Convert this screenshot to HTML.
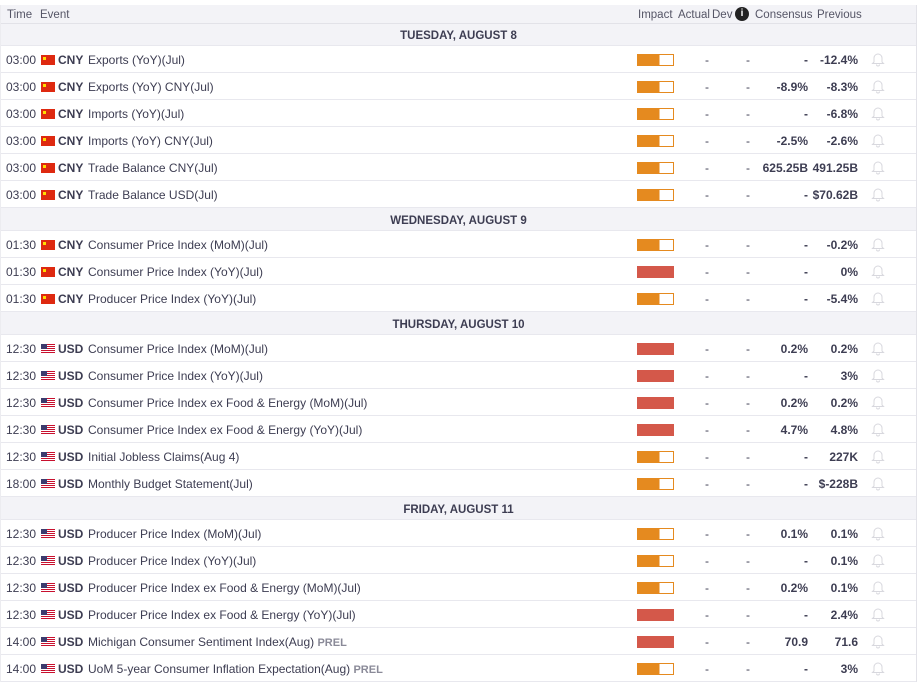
<!DOCTYPE html><html><head><meta charset="utf-8"><style>
*{margin:0;padding:0;box-sizing:border-box}
body{width:918px;height:683px;background:#fff;font-family:"Liberation Sans",Arial,sans-serif;font-size:12px;color:#3d3d52;overflow:hidden;position:relative}
.wrap{position:absolute;left:0;top:5px;width:917px;border-right:1px solid #e2e2e8;border-left:1px solid #ececf0}
.hdr{height:19px;background:#f3f3f7;border-bottom:1px solid #e2e2e8;position:relative;color:#555566;font-size:11.5px}
.hdr span{position:absolute;top:4px}
.date{height:22px;background:#f3f3f7;text-align:center;font-weight:bold;font-size:11.5px;line-height:20px;padding-top:2px;color:#3d3d52;border-bottom:1px solid #e8e8ee}
.date.n{height:23px;line-height:20px;padding-top:3px}
.row{height:27px;border-bottom:1px solid #e8e8ee;position:relative}
.row>*{position:absolute;top:7px}
.t{left:5px}
.f{left:40px;top:9px;width:14px;height:10px}
.cn{background:#de2910}
.cn:after{content:"";position:absolute;left:2px;top:2px;width:3px;height:3px;background:#ffde00}
.us{background:repeating-linear-gradient(#c8102e 0 1px,#fff 1px 2px)}
.us:after{content:"";position:absolute;left:0;top:0;width:6px;height:5px;background:#3c3b6e}
.c{left:57px;font-weight:bold}
.e{left:87px}
.p{color:#8a8a98;font-weight:bold;font-size:11px}
.bar{left:636px;top:8px;width:37px;height:12px;border:1px solid #e58a1f;background:linear-gradient(90deg,#e58a1f 62%,#fff 62%)}
.bar.r{background:#d4584a;border-color:#d4584a}
.a{left:704px}.d{left:745px}
.cs{right:108px;font-weight:bold;text-align:right}
.pv{right:58px;font-weight:bold;text-align:right}
.b{left:870px;top:5px}
</style></head><body><div class="wrap">
<div class="hdr"><span style="left:6px">Time</span><span style="left:39px">Event</span><span style="left:637px">Impact</span><span style="left:677px">Actual</span><span style="left:711px">Dev</span><span style="left:734px;top:2px;width:14px;height:14px;border-radius:50%;background:#222;color:#fff;text-align:center;font-weight:bold;font-size:10px;line-height:14px">i</span><span style="left:754px">Consensus</span><span style="left:816px">Previous</span></div>
<div class="date">TUESDAY, AUGUST 8</div>
<div class="row"><span class="t">03:00</span><i class="f cn"></i><span class="c">CNY</span><span class="e">Exports (YoY)(Jul)</span><i class="bar"></i><span class="a">-</span><span class="d">-</span><span class="cs">-</span><span class="pv">-12.4%</span><svg class="b" width="14" height="16" viewBox="0 0 14 16"><path d="M3 11V7a4 4 0 0 1 8 0v4l1.5 1.5h-11zM5.5 13.5a1.5 1.5 0 0 0 3 0" fill="none" stroke="#d8d8de"/></svg></div>
<div class="row"><span class="t">03:00</span><i class="f cn"></i><span class="c">CNY</span><span class="e">Exports (YoY) CNY(Jul)</span><i class="bar"></i><span class="a">-</span><span class="d">-</span><span class="cs">-8.9%</span><span class="pv">-8.3%</span><svg class="b" width="14" height="16" viewBox="0 0 14 16"><path d="M3 11V7a4 4 0 0 1 8 0v4l1.5 1.5h-11zM5.5 13.5a1.5 1.5 0 0 0 3 0" fill="none" stroke="#d8d8de"/></svg></div>
<div class="row"><span class="t">03:00</span><i class="f cn"></i><span class="c">CNY</span><span class="e">Imports (YoY)(Jul)</span><i class="bar"></i><span class="a">-</span><span class="d">-</span><span class="cs">-</span><span class="pv">-6.8%</span><svg class="b" width="14" height="16" viewBox="0 0 14 16"><path d="M3 11V7a4 4 0 0 1 8 0v4l1.5 1.5h-11zM5.5 13.5a1.5 1.5 0 0 0 3 0" fill="none" stroke="#d8d8de"/></svg></div>
<div class="row"><span class="t">03:00</span><i class="f cn"></i><span class="c">CNY</span><span class="e">Imports (YoY) CNY(Jul)</span><i class="bar"></i><span class="a">-</span><span class="d">-</span><span class="cs">-2.5%</span><span class="pv">-2.6%</span><svg class="b" width="14" height="16" viewBox="0 0 14 16"><path d="M3 11V7a4 4 0 0 1 8 0v4l1.5 1.5h-11zM5.5 13.5a1.5 1.5 0 0 0 3 0" fill="none" stroke="#d8d8de"/></svg></div>
<div class="row"><span class="t">03:00</span><i class="f cn"></i><span class="c">CNY</span><span class="e">Trade Balance CNY(Jul)</span><i class="bar"></i><span class="a">-</span><span class="d">-</span><span class="cs">625.25B</span><span class="pv">491.25B</span><svg class="b" width="14" height="16" viewBox="0 0 14 16"><path d="M3 11V7a4 4 0 0 1 8 0v4l1.5 1.5h-11zM5.5 13.5a1.5 1.5 0 0 0 3 0" fill="none" stroke="#d8d8de"/></svg></div>
<div class="row"><span class="t">03:00</span><i class="f cn"></i><span class="c">CNY</span><span class="e">Trade Balance USD(Jul)</span><i class="bar"></i><span class="a">-</span><span class="d">-</span><span class="cs">-</span><span class="pv">$70.62B</span><svg class="b" width="14" height="16" viewBox="0 0 14 16"><path d="M3 11V7a4 4 0 0 1 8 0v4l1.5 1.5h-11zM5.5 13.5a1.5 1.5 0 0 0 3 0" fill="none" stroke="#d8d8de"/></svg></div>
<div class="date n">WEDNESDAY, AUGUST 9</div>
<div class="row"><span class="t">01:30</span><i class="f cn"></i><span class="c">CNY</span><span class="e">Consumer Price Index (MoM)(Jul)</span><i class="bar"></i><span class="a">-</span><span class="d">-</span><span class="cs">-</span><span class="pv">-0.2%</span><svg class="b" width="14" height="16" viewBox="0 0 14 16"><path d="M3 11V7a4 4 0 0 1 8 0v4l1.5 1.5h-11zM5.5 13.5a1.5 1.5 0 0 0 3 0" fill="none" stroke="#d8d8de"/></svg></div>
<div class="row"><span class="t">01:30</span><i class="f cn"></i><span class="c">CNY</span><span class="e">Consumer Price Index (YoY)(Jul)</span><i class="bar r"></i><span class="a">-</span><span class="d">-</span><span class="cs">-</span><span class="pv">0%</span><svg class="b" width="14" height="16" viewBox="0 0 14 16"><path d="M3 11V7a4 4 0 0 1 8 0v4l1.5 1.5h-11zM5.5 13.5a1.5 1.5 0 0 0 3 0" fill="none" stroke="#d8d8de"/></svg></div>
<div class="row"><span class="t">01:30</span><i class="f cn"></i><span class="c">CNY</span><span class="e">Producer Price Index (YoY)(Jul)</span><i class="bar"></i><span class="a">-</span><span class="d">-</span><span class="cs">-</span><span class="pv">-5.4%</span><svg class="b" width="14" height="16" viewBox="0 0 14 16"><path d="M3 11V7a4 4 0 0 1 8 0v4l1.5 1.5h-11zM5.5 13.5a1.5 1.5 0 0 0 3 0" fill="none" stroke="#d8d8de"/></svg></div>
<div class="date n">THURSDAY, AUGUST 10</div>
<div class="row"><span class="t">12:30</span><i class="f us"></i><span class="c">USD</span><span class="e">Consumer Price Index (MoM)(Jul)</span><i class="bar r"></i><span class="a">-</span><span class="d">-</span><span class="cs">0.2%</span><span class="pv">0.2%</span><svg class="b" width="14" height="16" viewBox="0 0 14 16"><path d="M3 11V7a4 4 0 0 1 8 0v4l1.5 1.5h-11zM5.5 13.5a1.5 1.5 0 0 0 3 0" fill="none" stroke="#d8d8de"/></svg></div>
<div class="row"><span class="t">12:30</span><i class="f us"></i><span class="c">USD</span><span class="e">Consumer Price Index (YoY)(Jul)</span><i class="bar r"></i><span class="a">-</span><span class="d">-</span><span class="cs">-</span><span class="pv">3%</span><svg class="b" width="14" height="16" viewBox="0 0 14 16"><path d="M3 11V7a4 4 0 0 1 8 0v4l1.5 1.5h-11zM5.5 13.5a1.5 1.5 0 0 0 3 0" fill="none" stroke="#d8d8de"/></svg></div>
<div class="row"><span class="t">12:30</span><i class="f us"></i><span class="c">USD</span><span class="e">Consumer Price Index ex Food &amp; Energy (MoM)(Jul)</span><i class="bar r"></i><span class="a">-</span><span class="d">-</span><span class="cs">0.2%</span><span class="pv">0.2%</span><svg class="b" width="14" height="16" viewBox="0 0 14 16"><path d="M3 11V7a4 4 0 0 1 8 0v4l1.5 1.5h-11zM5.5 13.5a1.5 1.5 0 0 0 3 0" fill="none" stroke="#d8d8de"/></svg></div>
<div class="row"><span class="t">12:30</span><i class="f us"></i><span class="c">USD</span><span class="e">Consumer Price Index ex Food &amp; Energy (YoY)(Jul)</span><i class="bar r"></i><span class="a">-</span><span class="d">-</span><span class="cs">4.7%</span><span class="pv">4.8%</span><svg class="b" width="14" height="16" viewBox="0 0 14 16"><path d="M3 11V7a4 4 0 0 1 8 0v4l1.5 1.5h-11zM5.5 13.5a1.5 1.5 0 0 0 3 0" fill="none" stroke="#d8d8de"/></svg></div>
<div class="row"><span class="t">12:30</span><i class="f us"></i><span class="c">USD</span><span class="e">Initial Jobless Claims(Aug 4)</span><i class="bar"></i><span class="a">-</span><span class="d">-</span><span class="cs">-</span><span class="pv">227K</span><svg class="b" width="14" height="16" viewBox="0 0 14 16"><path d="M3 11V7a4 4 0 0 1 8 0v4l1.5 1.5h-11zM5.5 13.5a1.5 1.5 0 0 0 3 0" fill="none" stroke="#d8d8de"/></svg></div>
<div class="row"><span class="t">18:00</span><i class="f us"></i><span class="c">USD</span><span class="e">Monthly Budget Statement(Jul)</span><i class="bar"></i><span class="a">-</span><span class="d">-</span><span class="cs">-</span><span class="pv">$-228B</span><svg class="b" width="14" height="16" viewBox="0 0 14 16"><path d="M3 11V7a4 4 0 0 1 8 0v4l1.5 1.5h-11zM5.5 13.5a1.5 1.5 0 0 0 3 0" fill="none" stroke="#d8d8de"/></svg></div>
<div class="date n">FRIDAY, AUGUST 11</div>
<div class="row"><span class="t">12:30</span><i class="f us"></i><span class="c">USD</span><span class="e">Producer Price Index (MoM)(Jul)</span><i class="bar"></i><span class="a">-</span><span class="d">-</span><span class="cs">0.1%</span><span class="pv">0.1%</span><svg class="b" width="14" height="16" viewBox="0 0 14 16"><path d="M3 11V7a4 4 0 0 1 8 0v4l1.5 1.5h-11zM5.5 13.5a1.5 1.5 0 0 0 3 0" fill="none" stroke="#d8d8de"/></svg></div>
<div class="row"><span class="t">12:30</span><i class="f us"></i><span class="c">USD</span><span class="e">Producer Price Index (YoY)(Jul)</span><i class="bar"></i><span class="a">-</span><span class="d">-</span><span class="cs">-</span><span class="pv">0.1%</span><svg class="b" width="14" height="16" viewBox="0 0 14 16"><path d="M3 11V7a4 4 0 0 1 8 0v4l1.5 1.5h-11zM5.5 13.5a1.5 1.5 0 0 0 3 0" fill="none" stroke="#d8d8de"/></svg></div>
<div class="row"><span class="t">12:30</span><i class="f us"></i><span class="c">USD</span><span class="e">Producer Price Index ex Food &amp; Energy (MoM)(Jul)</span><i class="bar"></i><span class="a">-</span><span class="d">-</span><span class="cs">0.2%</span><span class="pv">0.1%</span><svg class="b" width="14" height="16" viewBox="0 0 14 16"><path d="M3 11V7a4 4 0 0 1 8 0v4l1.5 1.5h-11zM5.5 13.5a1.5 1.5 0 0 0 3 0" fill="none" stroke="#d8d8de"/></svg></div>
<div class="row"><span class="t">12:30</span><i class="f us"></i><span class="c">USD</span><span class="e">Producer Price Index ex Food &amp; Energy (YoY)(Jul)</span><i class="bar r"></i><span class="a">-</span><span class="d">-</span><span class="cs">-</span><span class="pv">2.4%</span><svg class="b" width="14" height="16" viewBox="0 0 14 16"><path d="M3 11V7a4 4 0 0 1 8 0v4l1.5 1.5h-11zM5.5 13.5a1.5 1.5 0 0 0 3 0" fill="none" stroke="#d8d8de"/></svg></div>
<div class="row"><span class="t">14:00</span><i class="f us"></i><span class="c">USD</span><span class="e">Michigan Consumer Sentiment Index(Aug) <b class="p">PREL</b></span><i class="bar r"></i><span class="a">-</span><span class="d">-</span><span class="cs">70.9</span><span class="pv">71.6</span><svg class="b" width="14" height="16" viewBox="0 0 14 16"><path d="M3 11V7a4 4 0 0 1 8 0v4l1.5 1.5h-11zM5.5 13.5a1.5 1.5 0 0 0 3 0" fill="none" stroke="#d8d8de"/></svg></div>
<div class="row"><span class="t">14:00</span><i class="f us"></i><span class="c">USD</span><span class="e">UoM 5-year Consumer Inflation Expectation(Aug) <b class="p">PREL</b></span><i class="bar"></i><span class="a">-</span><span class="d">-</span><span class="cs">-</span><span class="pv">3%</span><svg class="b" width="14" height="16" viewBox="0 0 14 16"><path d="M3 11V7a4 4 0 0 1 8 0v4l1.5 1.5h-11zM5.5 13.5a1.5 1.5 0 0 0 3 0" fill="none" stroke="#d8d8de"/></svg></div>
</div></body></html>
